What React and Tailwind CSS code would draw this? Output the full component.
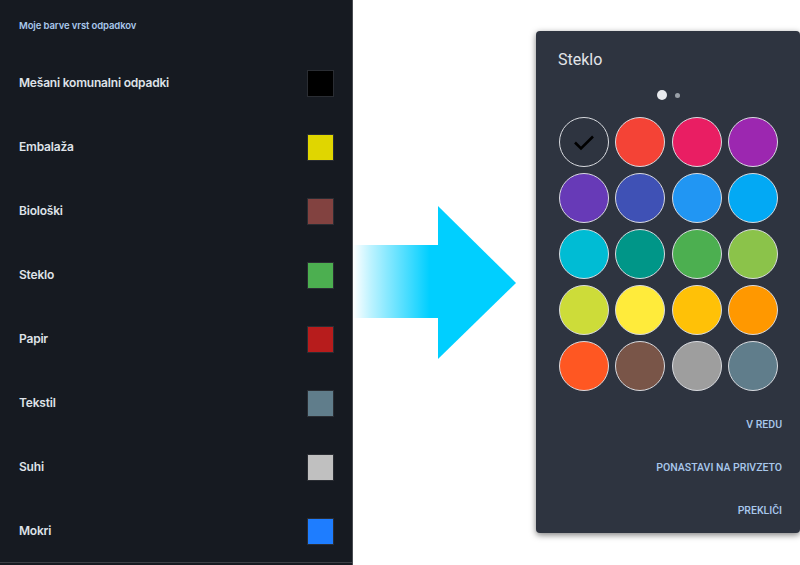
import React from "react";

const rows = [
  ["Mešani komunalni odpadki", "#000000"],
  ["Embalaža", "#e0d600"],
  ["Biološki", "#824240"],
  ["Steklo", "#4caf50"],
  ["Papir", "#b71c1c"],
  ["Tekstil", "#607d8b"],
  ["Suhi", "#c0c0c0"],
  ["Mokri", "#1e7dff"],
];

const circles = [
  null,
  "#f44336",
  "#e91e63",
  "#9c27b0",
  "#673ab7",
  "#3f51b5",
  "#2196f3",
  "#03a9f4",
  "#00bcd4",
  "#009688",
  "#4caf50",
  "#8bc34a",
  "#cddc39",
  "#ffeb3b",
  "#ffc107",
  "#ff9800",
  "#ff5722",
  "#795548",
  "#9e9e9e",
  "#607d8b",
];

export default function App() {
  return (
    <div className="w-[800px] h-[565px] bg-white flex overflow-hidden">
      {/* Left panel */}
      <div className="w-[353px] h-[565px] shrink-0 bg-[#161a21] border-r border-[#4a4d52] flex flex-col font-['Inter',sans-serif]">
        <div className="h-[563px] shrink-0 border-b border-[#3c3f45] flex flex-col">
          <div className="h-[51px] shrink-0 flex items-center pl-[19px] pt-[1px] text-[9.5px] font-semibold text-[#a9c8ec] tracking-[-0.1px]">
            Moje barve vrst odpadkov
          </div>
          {rows.map(([label, color]) => (
            <div key={label} className="h-[64px] shrink-0 flex items-center justify-between pl-[19px] pr-[18px]">
              <span className="text-[12px] font-semibold text-[#dfe2e8] tracking-[-0.2px]">{label}</span>
              <div
                className="w-[27px] h-[27px] border border-[#2a2d33]"
                style={{ backgroundColor: color }}
              />
            </div>
          ))}
        </div>
      </div>

      {/* Arrow */}
      <div className="w-[183px] h-[565px] shrink-0">
        <svg width="183" height="565" viewBox="0 0 183 565">
          <defs>
            <linearGradient id="shaft" x1="0" y1="0" x2="85" y2="0" gradientUnits="userSpaceOnUse">
              <stop offset="0" stopColor="#00cfff" stopOpacity="0" />
              <stop offset="0.2" stopColor="#00cfff" stopOpacity="0.25" />
              <stop offset="0.9" stopColor="#00cfff" stopOpacity="1" />
              <stop offset="1" stopColor="#00cfff" stopOpacity="1" />
            </linearGradient>
          </defs>
          <rect x="0" y="245" width="86" height="73" fill="url(#shaft)" />
          <polygon points="85,206 163,283 85,359" fill="#00cfff" />
        </svg>
      </div>

      {/* Dialog */}
      <div className="w-[264px] h-[565px] shrink-0 pt-[31px]">
        <div className="h-[502px] bg-[#2e3440] rounded-[4px] shadow-[0_2px_6px_rgba(0,0,0,0.5)] flex flex-col font-['Roboto',sans-serif]">
          <div className="h-[56px] shrink-0 flex items-center pl-[22px] pt-[1px] text-[16px] text-[#e2e4e8]">Steklo</div>
          <div className="h-[18px] shrink-0 flex items-center justify-center gap-[8px] mt-[-1px]">
            <div className="w-[10px] h-[10px] rounded-full bg-[#e8eaee]" />
            <div className="w-[5px] h-[5px] rounded-full bg-[#9aa0a8]" />
          </div>
          <div className="grid shrink-0 grid-cols-[repeat(4,50px)] gap-x-[6.3px] gap-y-[6px] pl-[23px] mt-[13px]">
            {circles.map((c, i) => (
              <div
                key={i}
                className="w-[50px] h-[50px] rounded-full border border-[#d8dadf] flex items-center justify-center"
                style={{ backgroundColor: c || "transparent" }}
              >
                {c === null && (
                  <svg width="24" height="24" viewBox="0 0 24 24">
                    <path d="M3 12.5 L9 18.5 L21 6.5" fill="none" stroke="#000" strokeWidth="2.6" />
                  </svg>
                )}
              </div>
            ))}
          </div>
          <div className="flex shrink-0 flex-col items-end pr-[18px] mt-[12px] text-[10.5px] font-medium text-[#a9c8ec]">
            <div className="h-[43px] flex items-center">V REDU</div>
            <div className="h-[43px] flex items-center">PONASTAVI NA PRIVZETO</div>
            <div className="h-[44px] flex items-center">PREKLIČI</div>
          </div>
        </div>
      </div>
    </div>
  );
}
